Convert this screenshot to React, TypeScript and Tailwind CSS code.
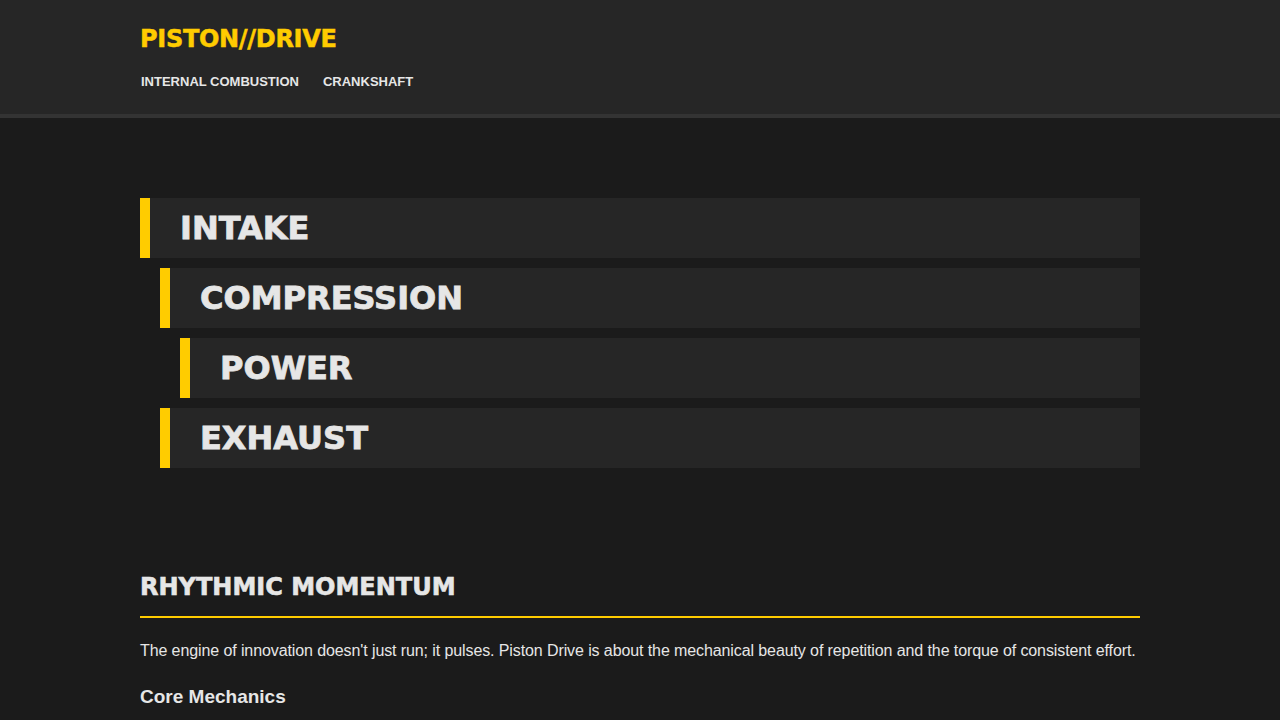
export default function App() {
  const rows = [
    { label: "INTAKE", ml: "ml-0" },
    { label: "COMPRESSION", ml: "ml-[20px]" },
    { label: "POWER", ml: "ml-[40px]" },
    { label: "EXHAUST", ml: "ml-[20px]" },
  ];
  return (
    <div className="min-h-[720px] bg-[#1b1b1b] text-[#e6e6e6]" style={{ fontFamily: '"Liberation Sans", Arial, sans-serif' }}>
      <header className="bg-[#262626] border-b-4 border-[#333333] h-[118px]">
        <div className="w-[1000px] mx-auto pt-[26px]">
          <div className="text-[#ffcc00] text-[24px] leading-[26px] font-bold tracking-[-0.3px] [-webkit-text-stroke:0.5px_#ffcc00]" style={{ fontFamily: '"DejaVu Sans", sans-serif' }}>
            PISTON//DRIVE
          </div>
          <nav className="flex gap-[24px] mt-[22px] pl-[1px] text-[13px] font-bold leading-[16px] text-[#e6e6e6]">
            <span>INTERNAL COMBUSTION</span>
            <span>CRANKSHAFT</span>
          </nav>
        </div>
      </header>
      <main className="w-[1000px] mx-auto">
        <div className="flex flex-col gap-[10px] pt-[80px]">
          {rows.map((r) => (
            <div key={r.label} className={`${r.ml} h-[60px] bg-[#262626] border-l-[10px] border-[#ffcc00] flex items-center pl-[30px]`}>
              <span className="text-[32px] font-bold leading-none text-[#e6e6e6] [-webkit-text-stroke:0.8px_#e6e6e6]" style={{ fontFamily: '"DejaVu Sans", sans-serif' }}>
                {r.label}
              </span>
            </div>
          ))}
        </div>
        <section className="pt-[104px]">
          <h2 className="text-[24px] font-bold leading-[30px] pb-[14px] border-b-2 border-[#ffcc00] [-webkit-text-stroke:0.6px_#e6e6e6]" style={{ fontFamily: '"DejaVu Sans", sans-serif' }}>
            RHYTHMIC MOMENTUM
          </h2>
          <p className="mt-[21px] text-[16px] leading-[24px] tracking-[-0.1px]">
            The engine of innovation doesn't just run; it pulses. Piston Drive is about the mechanical beauty of repetition and the torque of consistent effort.
          </p>
          <h3 className="mt-[22px] text-[19px] font-bold leading-[24px]">Core Mechanics</h3>
        </section>
      </main>
    </div>
  );
}
